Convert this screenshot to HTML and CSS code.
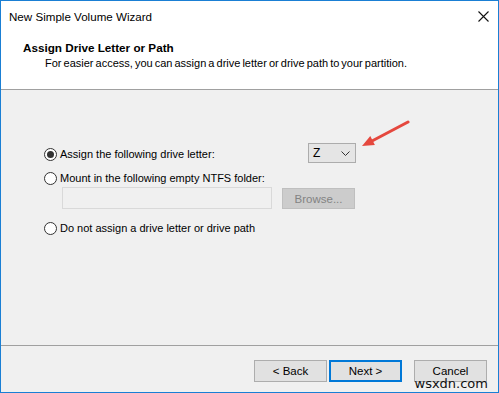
FILE: index.html
```html
<!DOCTYPE html>
<html lang="en">
<head>
  <meta charset="UTF-8">
  <title>New Simple Volume Wizard</title>
  <link rel="stylesheet" href="styles.css">
</head>
<body>
<div class="window">
  <div class="titlebar">
    <span class="title">New Simple Volume Wizard</span>
    <svg class="close" width="11" height="11" viewBox="0 0 11 11">
      <path d="M0.5 0.5 L10.5 10.5 M10.5 0.5 L0.5 10.5" stroke="#111" stroke-width="1.1" fill="none"/>
    </svg>
  </div>
  <div class="header">
    <h2>Assign Drive Letter or Path</h2>
    <p>For easier access, you can assign a drive letter or drive path to your partition.</p>
  </div>
  <div class="content">
    <div class="row first">
      <span class="radio checked"></span>
      <span class="label">Assign the following drive letter:</span>
      <div class="select">
        <span>Z</span>
        <svg width="9" height="5" viewBox="0 0 9 5"><path d="M0.5 0.5 L4.5 4.5 L8.5 0.5" stroke="#333" stroke-width="1" fill="none"/></svg>
      </div>
    </div>
    <div class="row mount">
      <span class="radio"></span>
      <span class="label">Mount in the following empty NTFS folder:</span>
    </div>
    <div class="folder-row">
      <div class="textbox"></div>
      <button class="btn disabled">Browse...</button>
    </div>
    <div class="row">
      <span class="radio"></span>
      <span class="label">Do not assign a drive letter or drive path</span>
    </div>
    <!-- annotation arrow pointing at the drive letter box -->
    <svg class="arrow" width="52" height="30" viewBox="0 0 52 30">
      <path d="M48 2 L12 21" stroke="#e5483e" stroke-width="3" stroke-linecap="round" fill="none"/>
      <path d="M2 26 L10.3 16.1 L14.9 24.9 Z" fill="#e5483e"/>
    </svg>
  </div>
  <div class="footer">
    <button class="btn">&lt; Back</button>
    <button class="btn default">Next &gt;</button>
    <button class="btn cancel">Cancel</button>
    <span class="watermark">wsxdn.com</span>
  </div>
</div>
</body>
</html>
```
FILE: styles.css
```css
body {
  margin: 0;
  padding: 0;
  font-family: "Liberation Sans", Arial, sans-serif;
  font-size: 11px;
  color: #000;
  background-color: #f0f0f0;
}

.window {
  width: 499px;
  height: 393px;
  box-sizing: border-box;
  border: 1px solid #1a7fd4;
  display: flex;
  flex-direction: column;
  background-color: #f0f0f0;
}

.titlebar {
  height: 30px;
  background-color: #fff;
  display: flex;
  align-items: center;
  justify-content: space-between;
  padding: 0 9px 0 8px;
}

.title {
  font-size: 11.6px;
}

.header {
  background-color: #fff;
  height: 59px;
  border-bottom: 1px solid #a0a0a0;
  padding-left: 22px;
  box-sizing: border-box;
}

.header h2 {
  margin: 10px 0 0 0;
  font-size: 11.7px;
  font-weight: bold;
}

.header p {
  margin: 3px 0 0 22px;
  word-spacing: -1px;
}

.content {
  flex: 1;
  position: relative;
  padding: 58px 0 0 43px;
  border-bottom: 1px solid #a0a0a0;
}

.row {
  display: flex;
  align-items: center;
  height: 13px;
  line-height: 13px;
  margin-bottom: 11px;
}

.row.mount {
  margin-bottom: 2px;
}

.radio {
  width: 11px;
  height: 11px;
  border: 1px solid #333;
  border-radius: 50%;
  background-color: #fff;
  margin-right: 3px;
  display: flex;
  align-items: center;
  justify-content: center;
  flex-shrink: 0;
}

.radio.checked::after {
  content: "";
  width: 7px;
  height: 7px;
  border-radius: 50%;
  background-color: #333;
}

.row.first .label {
  width: 248px;
}

.select {
  width: 48px;
  height: 20px;
  margin: -5px 0 -2px 0;
  box-sizing: border-box;
  border: 1px solid #acacac;
  background-color: #e5e5e5;
  display: flex;
  align-items: center;
  justify-content: space-between;
  padding: 0 5px 0 4px;
  font-size: 12px;
}

.folder-row {
  display: flex;
  gap: 10px;
  margin: 0 0 13px 18px;
}

.textbox {
  width: 210px;
  height: 22px;
  box-sizing: border-box;
  border: 1px solid #d9d9d9;
  background-color: #f0f0f0;
}

.btn {
  font-family: "Liberation Sans", Arial, sans-serif;
  font-size: 11.5px;
  width: 73px;
  height: 22px;
  box-sizing: border-box;
  border: 1px solid #adadad;
  background-color: #e1e1e1;
  color: #000;
  padding: 0;
}

.btn.disabled {
  background-color: #cccccc;
  border-color: #bfbfbf;
  color: #838383;
  margin-top: 1px;
  height: 21px;
}

.btn.default {
  border: 2px solid #0078d7;
}

.btn.cancel {
  margin-left: 10px;
}

.arrow {
  position: absolute;
  left: 359px;
  top: 30px;
}

.footer {
  height: 46px;
  display: flex;
  align-items: flex-start;
  justify-content: flex-end;
  gap: 2px;
  padding: 14px 11px 0 0;
  box-sizing: border-box;
  position: relative;
}

.watermark {
  position: absolute;
  right: 10px;
  bottom: 1px;
  font-family: "DejaVu Sans", sans-serif;
  font-size: 13px;
  color: #111;
}
```
